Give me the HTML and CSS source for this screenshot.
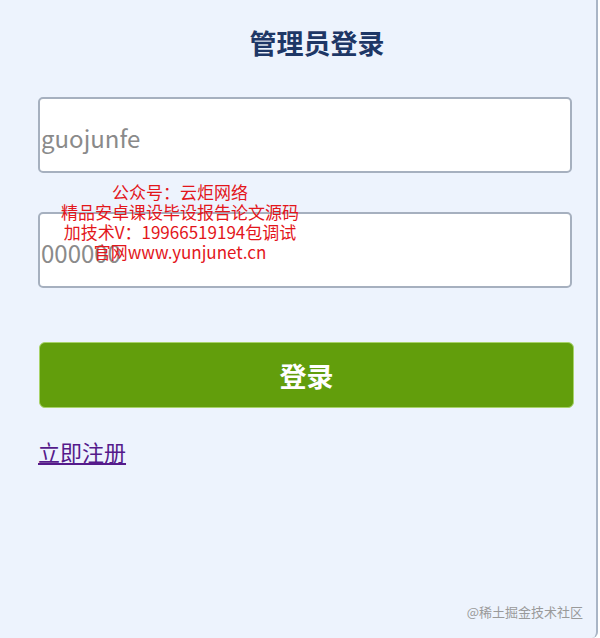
FILE: index.html
```html
<!DOCTYPE html>
<html lang="zh-CN">
<head>
    <meta charset="UTF-8">
    <meta name="viewport" content="width=device-width, initial-scale=1.0">
    <title>管理员登录</title>
    <link rel="stylesheet" href="styles.css">
</head>
<body>
    <div class="panel">
        <h1 class="title">管理员登录</h1>

        <form class="login-form">
            <input class="field" type="text" name="username" placeholder="guojunfe">
            <input class="field field-pwd" type="password" name="password" placeholder="000000">
            <button class="login-btn" type="button">登录</button>
        </form>

        <a class="register" href="#">立即注册</a>

        <!-- red notice printed over the form -->
        <div class="notice">
            公众号：云炬网络<br>
            精品安卓课设毕设报告论文源码<br>
            加技术V：19966519194包调试<br>
            官网www.yunjunet.cn
        </div>

        <div class="credit">@稀土掘金技术社区</div>
    </div>
</body>
</html>
```

FILE: styles.css
```css
body {
    margin: 0;
    padding: 0;
    background-color: #fff;
    font-family: "Noto Sans CJK SC", "Noto Sans", sans-serif;
}

.panel {
    position: relative;
    width: 598px;
    height: 638px;
    box-sizing: border-box;
    padding: 23px 24px 0 38px;
    background-color: #edf3fd;
    border-right: 2px solid #a9b5c6;
    border-bottom-right-radius: 6px;
}

.title {
    margin: 0;
    padding-left: 24px;
    font-size: 27px;
    line-height: 40px;
    font-weight: bold;
    color: #1e3766;
    text-align: center;
}

.login-form {
    display: flex;
    flex-direction: column;
    margin-top: 34px;
}

.field {
    width: 534px;
    height: 76px;
    box-sizing: border-box;
    padding: 4px 1px 0;
    border: 2px solid #a6b0bf;
    border-radius: 5px;
    background-color: #fff;
    font-family: inherit;
    font-size: 24px;
    color: #333;
    outline: none;
}

.field::placeholder {
    color: #8a8a8a;
}

.field-pwd {
    margin-top: 39px;
}

.login-btn {
    width: 535px;
    height: 66px;
    margin: 54px 0 0 1px;
    border: 1px solid #a8d36a;
    border-radius: 6px;
    background-color: #629e0c;
    color: #fff;
    font-family: inherit;
    font-size: 27px;
    font-weight: bold;
    cursor: pointer;
}

.register {
    display: inline-block;
    margin-top: 28px;
    font-size: 22px;
    line-height: 30px;
    color: #551a8b;
}

.notice {
    position: absolute;
    top: 182px;
    left: 0;
    width: 360px;
    font-size: 17px;
    line-height: 20px;
    color: #e3161b;
    text-align: center;
}

.credit {
    position: absolute;
    right: 13px;
    bottom: 17px;
    font-size: 13px;
    color: #9a9a9a;
}
```
